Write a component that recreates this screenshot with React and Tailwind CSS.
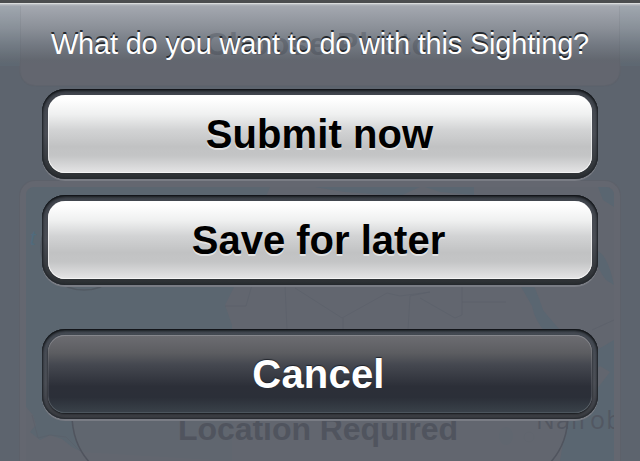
function MapArt() {
  return (
    <svg className="block h-[274px] w-[588px] rounded-t-lg" viewBox="26 187 588 274" preserveAspectRatio="none">
      <rect x="26" y="187" width="588" height="274" fill="#5b6670" />
      <path
        d="M270 187 L614 187 L614 461 L26 461 L26 407 L33 415 L36 425 L30 432 L40 440 L50 435 L62 439 L72 447 L82 452 L232 461 L232 325 L225 305 L235 285 L240 250 L260 210Z"
        fill="#62666f"
      />
      <path
        d="M315 187 H420 L400 196 L345 192Z M425 187 H474 V195 L440 192Z M598 187 H614 V207 L603 200Z M595 250 Q607 252 614 285 L606 280 Q596 268 595 250Z M520 285 L534 286 Q540 300 543 310 Q555 325 565 335 L548 335 Q535 322 532 306Z M590 354 L614 340 V461 H560 L566 425 Q585 405 610 372 L600 366 L590 374Z"
        fill="#5a6671"
      />
      <g fill="none" stroke="#5a5f69" strokeOpacity=".6" strokeWidth="1">
        <path d="M252 285 L246 306 L225 306 M285 285 L287 330 M295 288 L342 318 L387 293 L400 296 L430 292 L410 296 L408 330 M343 318 V330 M462 285 V315 L455 318 L420 298 M462 302 H506 M592 330 L614 320" />
        <circle cx="529" cy="437" r="5" />
        <path d="M32 415 L38 438 L50 435 L66 437 L80 451" />
      </g>
      <ellipse cx="506" cy="436" rx="7" ry="9" fill="#5a6470" />
      <circle cx="84" cy="247" r="43" fill="none" stroke="#50565f" strokeOpacity=".8" strokeWidth="1.5" />
      <text x="30" y="245" fill="#506b7d" fontFamily="'Liberation Sans', sans-serif" fontStyle="italic" fontSize="20">t</text>
      <path d="M72 395 V414 Q72 445 92 465 H548 Q568 445 568 414 V395Z" fill="#62666f" fillOpacity=".7" stroke="#50545e" strokeWidth="1.5" />
      <text x="536" y="429" fill="#50545e" fillOpacity=".8" fontFamily="'Open Sans', sans-serif" fontSize="25" letterSpacing="1.2">Nairobi</text>
      <text x="178" y="440" textLength="280" fill="#50545e" fontFamily="'Liberation Sans', sans-serif" fontWeight="700" fontSize="32">Location Required</text>
    </svg>
  )
}

function DimmedPage() {
  return (
    <div className="absolute inset-0 flex flex-col items-center overflow-hidden bg-[#5d646e]">
      <div className="flex h-[86px] w-[602px] shrink-0 justify-center rounded-b-[16px] border border-t-0 border-[#5f636c] bg-[#63666f]" />
      <div className="mt-[94px] w-[602px] shrink-0 rounded-t-[16px] border border-b-0 border-[#5d616a] bg-[#646770] px-1.5 pt-1.5">
        <MapArt />
      </div>
    </div>
  )
}

function SheetButton({ children, dark = false, textClass }) {
  return (
    <button
      className={
        "block h-[90px] w-[556px] shrink-0 rounded-[23px] p-1.5 shadow-[0_2px_0_#797c84,inset_0_1px_1px_#121519,inset_0_0_2px_1px_#24282d,inset_0_2px_3px_#1e2226] " +
        (dark
          ? "bg-[linear-gradient(#454b54,#4b4e56_60%,#3b3d42)]"
          : "bg-[linear-gradient(#40454d,#4a4d55_50%,#2b2f32)]")
      }
    >
      <span
        className={
          "flex h-[78px] items-center justify-center rounded-[17px] font-bold leading-none " +
          (dark
            ? "bg-[linear-gradient(#6d6d72,#5c5d61_23%,#454850_38%,#2c2f38_66%,#2b2f38_80%,#3a424a)] text-white shadow-[inset_0_1px_0_#85868c,inset_1px_0_0_#ffffff16,inset_-1px_0_0_#ffffff20,inset_0_-1px_0_#4c555d,0_1px_2px_#15181c] [text-shadow:0_-1px_1px_#20242b]"
            : "bg-[linear-gradient(#fff_5%,#eff0f0_25%,#d2d3d4_45%,#c1c2c3_66%,#c4c5c6_78%,#e2e2e3_98%)] text-black shadow-[inset_0_-1px_0_#f4f4f4,inset_1px_0_0_#ffffff99,inset_-1px_0_0_#ffffff99] [text-shadow:0_2px_0_#e1e2e3]")
        }
      >
        <span className={textClass}>{children}</span>
      </span>
    </button>
  )
}

export default function App() {
  return (
    <main className="relative h-[461px] w-[640px] overflow-hidden font-['Liberation_Sans',Arial,sans-serif]">
      <DimmedPage />
      <section className="relative flex h-full flex-col items-center">
        <div className="h-[3px] w-full shrink-0 bg-[#4b4d4f]" />
        <header className="relative flex h-[86px] w-full shrink-0 justify-center border-t border-[#d9dbdc] bg-[linear-gradient(#c0c4c9_0px,#a4a8b0_2px,#8b9098_24px,#747a83_40px,#62676fcc_56px,#5d646e00_60px)]">
          <svg className="absolute inset-0 h-[86px] w-[640px]" viewBox="0 3 640 86">
            <path d="M20.500 5 V70 Q20.500 85.500 36 85.500 H604 Q619.500 85.500 619.500 70 V5" fill="none" stroke="#555963" strokeOpacity=".12" />
            <path d="M0 5H20V65H0Z M620 5H640V65H620Z" fill="#7895a3" fillOpacity=".08" />
            <text x="205" y="54" textLength="226" fill="#343943" fillOpacity=".3" fontWeight="700" fontSize="32">Choose Photo</text>
          </svg>
          <h1 className="relative pt-[23px] text-[29px] font-normal leading-[34px] tracking-[-0.2px] whitespace-nowrap text-white [text-shadow:0_-2px_0_#25292e]">
            What do you want to do with this Sighting?
          </h1>
        </header>
        <div className="flex flex-col gap-4">
          <SheetButton textClass="pr-px text-[40px] tracking-[0.1px]">Submit now</SheetButton>
          <SheetButton textClass="pr-[3px] text-[40px]">Save for later</SheetButton>
        </div>
        <div className="mt-11">
          <SheetButton dark textClass="pr-[3px] text-[40px] tracking-[0.2px]">Cancel</SheetButton>
        </div>
      </section>
    </main>
  )
}
